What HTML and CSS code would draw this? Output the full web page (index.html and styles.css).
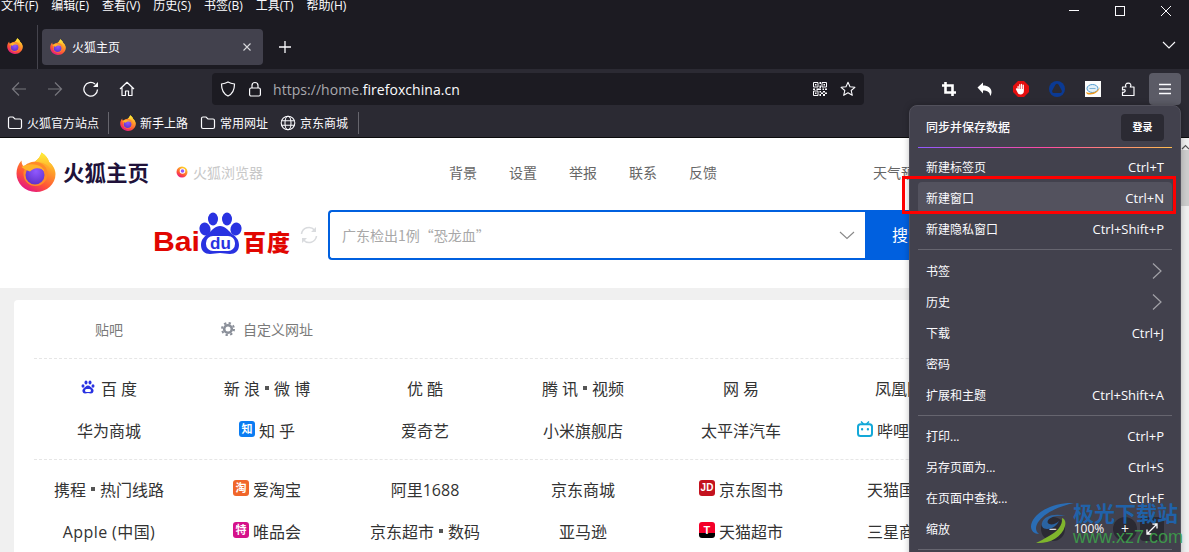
FILE: index.html
```html
<!DOCTYPE html>
<html lang="zh-CN">
<head>
<meta charset="utf-8">
<title>火狐主页</title>
<link rel="stylesheet" href="styles.css">
</head>
<body>
<svg class="defs" width="0" height="0" aria-hidden="true">
  <defs>
    <linearGradient id="ffBody" x1="0.85" y1="0.05" x2="0.3" y2="1">
      <stop offset="0" stop-color="#ffe226"/><stop offset="0.35" stop-color="#ff9a2b"/><stop offset="0.7" stop-color="#ff5138"/><stop offset="1" stop-color="#e31587"/>
    </linearGradient>
    <linearGradient id="ffFlame" x1="0.5" y1="0" x2="0.5" y2="1">
      <stop offset="0" stop-color="#fff03a"/><stop offset="1" stop-color="#ff9226"/>
    </linearGradient>
    <radialGradient id="ffGlobe" cx="0.55" cy="0.3" r="0.8">
      <stop offset="0" stop-color="#9059ff"/><stop offset="1" stop-color="#5b2bc4"/>
    </radialGradient>
    <symbol id="ff" viewBox="0 0 40 40">
      <path fill="url(#ffBody)" d="M20 40C9 40 .5 31.500 .5 21.500C.5 17 2 12.500 5.500 8.500C5.500 11.500 6.500 13.500 8 15C10 11.500 14.500 10 19 9.500C22 7.500 24.500 4.500 25.500 .5C30 3.500 32.500 7 33 10C37 13 39.500 17.500 39.500 22C39.500 32 31 40 20 40Z"/>
      <path fill="url(#ffFlame)" d="M25.500 .5C30 3.500 32.500 7 33 10C37 13 39 18 38 24C36 18 33 13 27 11C23.500 10 21 10 19 9.500C22 7.500 24.500 4.500 25.500 .5Z"/>
      <circle cx="19.500" cy="22" r="12" fill="#ff8a2a"/>
      <circle cx="19" cy="23" r="9.500" fill="url(#ffGlobe)"/>
      <path fill="#ffb32b" d="M5.500 15C9 12.500 15 11.500 21 13C25 14 27.500 16.500 28.500 19.500C26 16.500 22.500 15.500 19 16.500C17 17 15.500 18.200 14 19.500C11.500 18.800 8 17 5.500 15Z"/>
    </symbol>
    <symbol id="folder" viewBox="0 0 16 16">
      <path fill="none" stroke="currentColor" stroke-width="1.200" d="M1.500 3.500a1.500 1.500 0 0 1 1.500-1.500h3l2 2h5a1.500 1.500 0 0 1 1.500 1.500v6.500a1.500 1.500 0 0 1-1.500 1.500h-10a1.500 1.500 0 0 1-1.500-1.500z"/>
    </symbol>
    <symbol id="chev" viewBox="0 0 12 18">
      <path fill="none" stroke="currentColor" stroke-width="1.200" d="M2 1.500 10 9 2 16.500"/>
    </symbol>
  </defs>
</svg>

<div class="window">
  <header class="titlebar">
    <nav class="menubar">
      <span>文件(F)</span><span>编辑(E)</span><span>查看(V)</span><span>历史(S)</span><span>书签(B)</span><span>工具(T)</span><span>帮助(H)</span>
    </nav>
    <div class="winctl">
      <svg width="46" height="22" viewBox="0 0 46 22"><path d="M18 10.500h10" stroke="#fbfbfe"/></svg>
      <svg width="46" height="22" viewBox="0 0 46 22"><rect x="18.500" y="6.500" width="9" height="9" fill="none" stroke="#fbfbfe"/></svg>
      <svg width="46" height="22" viewBox="0 0 46 22"><path d="M18 6l10 10M28 6 18 16" stroke="#fbfbfe" fill="none"/></svg>
    </div>
  </header>

  <div class="tabbar">
    <svg class="pinned" width="16" height="16"><use href="#ff"/></svg>
    <div class="tabsep"></div>
    <div class="tab">
      <svg width="16" height="16"><use href="#ff"/></svg>
      <span class="tabtitle">火狐主页</span>
      <svg class="tabclose" width="10" height="10" viewBox="0 0 10 10"><path d="M1.500 1.500l7 7M8.500 1.500l-7 7" stroke="#d8d8dc" stroke-width="1.100"/></svg>
    </div>
    <svg class="newtab" width="14" height="14" viewBox="0 0 14 14"><path d="M7 1v12M1 7h12" stroke="#fbfbfe" stroke-width="1.300"/></svg>
    <svg class="alltabs" width="14" height="14" viewBox="0 0 14 14"><path d="M1 4l6 6 6-6" stroke="#fbfbfe" stroke-width="1.100" fill="none"/></svg>
  </div>

  <div class="toolbar">
    <div class="navbtn dim"><svg width="16" height="16" viewBox="0 0 16 16"><path d="M15 8H1.500M8 1.500 1.500 8 8 14.500" fill="none" stroke="currentColor" stroke-width="1.200"/></svg></div>
    <div class="navbtn dim"><svg width="16" height="16" viewBox="0 0 16 16"><path d="M1 8h13.500M8 1.500 14.500 8 8 14.500" fill="none" stroke="currentColor" stroke-width="1.200"/></svg></div>
    <div class="navbtn"><svg width="16" height="16" viewBox="0 0 16 16"><path d="M14.500 8.500A6.800 6.800 0 1 1 12 3" fill="none" stroke="currentColor" stroke-width="1.300"/><path d="M15 1v5h-5z" fill="currentColor"/></svg></div>
    <div class="navbtn"><svg width="16" height="16" viewBox="0 0 16 16"><path d="M1 8 8 1.300 15 8M3 6.500V14.500h3.500V10h3v4.500H13V6.500" fill="none" stroke="currentColor" stroke-width="1.200" stroke-linejoin="round"/></svg></div>

    <div class="urlbar">
      <svg class="ub-shield" width="16" height="16" viewBox="0 0 16 16"><path d="M8 1C5.500 2.500 3.500 2.800 1.500 3c0 5 1 9.500 6.500 12 5.500-2.500 6.500-7 6.500-12C12.500 2.800 10.500 2.500 8 1Z" fill="none" stroke="#fbfbfe" stroke-width="1.200"/></svg>
      <svg class="ub-lock" width="14" height="16" viewBox="0 0 14 16"><rect x="1.600" y="7" width="10.800" height="8" rx="1.500" fill="none" stroke="#fbfbfe" stroke-width="1.200"/><path d="M4 7V4.500a3 3 0 0 1 6 0V7" fill="none" stroke="#fbfbfe" stroke-width="1.200"/></svg>
      <span class="url"><span class="url-dim">https://home.</span>firefoxchina.cn</span>
      <svg class="ub-qr" width="14" height="14" viewBox="0 0 14 14"><path fill="none" stroke="#fbfbfe" d="M.5.5h4.500v4.500H.5zM9 .5h4.500v4.500H9zM.5 9h4.500v4.500H.5z"/><path fill="#fbfbfe" d="M2 2h1.500v1.500H2zM10.500 2H12v1.500h-1.500zM2 10.500h1.500V12H2zM6.500 0H8v2H6.500zM6.500 3.500H8V6H6.500zM0 6.500h2V8H0zM3.500 6.500H8V8H3.500zM9.500 6.500H11V8H9.500zM12 6.500h2V8h-2zM6.500 9H8v1.500H6.500zM8 10.500h2V12H8zM6.500 12H8v2H6.500zM10 9h2v1.500h-2zM12 10.500h2V12h-2zM10 12h2v2h-2z"/></svg>
      <svg class="ub-star" width="16" height="16" viewBox="0 0 16 16"><path d="M8 1.300 10 5.800l4.900.5-3.700 3.200 1.100 4.800L8 11.800l-4.300 2.500 1.100-4.800L1.100 6.300 6 5.800Z" fill="none" stroke="#fbfbfe" stroke-width="1.100" stroke-linejoin="round"/></svg>
    </div>

    <div class="extensions">
      <div class="navbtn"><svg width="16" height="16" viewBox="0 0 16 16"><path d="M4.500 1v10.500H15M1 4.500h10.500V15" fill="none" stroke="#fff" stroke-width="2.600"/></svg></div>
      <div class="navbtn"><svg width="16" height="16" viewBox="0 0 16 16"><path d="M.5 6.500 6 1.500v3c5 0 8.500 2.500 8.500 6.500 0 1.500-.5 3-1.500 4 .3-3-1.500-5.500-7-5.500v3Z" fill="#fff"/></svg></div>
      <div class="navbtn"><svg width="16" height="16" viewBox="0 0 16 16"><path d="M5 0h6l5 5v6l-5 5H5l-5-5V5Z" fill="#e30e0e"/><path d="M4.500 5.500c0-1 1.200-1 1.200 0V8h.5V3.700c0-1 1.200-1 1.200 0V8h.5V3.400c0-1 1.300-1 1.300 0V8h.5V4.300c0-1 1.200-1 1.200 0V10c0 2-1.300 3.500-3.300 3.500-1.800 0-2.500-1-3.200-2.300L3 8.500c-.5-1 .7-1.600 1.500-.7Z" fill="#fff"/></svg></div>
      <div class="navbtn"><svg width="16" height="16" viewBox="0 0 16 16"><circle cx="8" cy="8" r="8" fill="#0b3a94"/><path d="M8 2.800c.8 0 1.200.4 1.600 1l3 5.400c.7 1.300-.1 2.800-1.400 2.800H4.800c-1.300 0-2.100-1.500-1.400-2.800l3-5.400c.4-.6.800-1 1.600-1Z" fill="#2b2a33"/></svg></div>
      <div class="navbtn"><svg width="16" height="16" viewBox="0 0 16 16"><rect width="16" height="16" fill="#fdfdfd"/><ellipse cx="7.500" cy="7.500" rx="5.500" ry="4" fill="#e3f0f8" stroke="#3f92cc" stroke-width=".9"/><path d="M1 11c4 2 11 1 14-5-1 5-7 9-13 7Z" fill="#ef9a1d"/><path d="M4.500 7.500h6" stroke="#7fb4d8"/></svg></div>
      <div class="navbtn"><svg width="16" height="16" viewBox="0 0 16 16"><path d="M1.500 6H5c-.8-1.200-.8-2 0-3 .8-1.300 3.700-1.300 4.500 0 .7 1 .6 1.900-.2 3H13v8.500H1.500v-3.300c1.300.6 2.700-.3 2.700-1.600S2.800 8.400 1.500 9Z" fill="none" stroke="#fbfbfe" stroke-width="1.200" stroke-linejoin="round"/></svg></div>
      <div class="navbtn active"><svg width="14" height="12" viewBox="0 0 14 12"><path d="M1 1.500h12M1 6h12M1 10.500h12" stroke="#fbfbfe" stroke-width="1.300"/></svg></div>
    </div>
  </div>

  <div class="bookmarks">
    <span class="bm first"><svg width="16" height="16"><use href="#folder"/></svg>火狐官方站点</span>
    <i class="bmsep"></i>
    <span class="bm"><svg width="16" height="16"><use href="#ff"/></svg>新手上路</span>
    <span class="bm"><svg width="16" height="16"><use href="#folder"/></svg>常用网址</span>
    <span class="bm last"><svg width="16" height="16" viewBox="0 0 16 16"><g fill="none" stroke="currentColor" stroke-width="1.100"><circle cx="8" cy="8" r="6.800"/><ellipse cx="8" cy="8" rx="3" ry="6.800"/><path d="M1.500 5.700h13M1.500 10.300h13"/></g></svg>京东商城</span>
    <i class="bmsep"></i>
  </div>

  <main class="page">
    <section class="masthead">
      <div class="hd-top">
        <svg class="logo" width="40" height="40"><use href="#ff"/></svg>
        <span class="brand">火狐主页</span>
        <svg class="sublogo" width="12" height="12" viewBox="0 0 12 12"><circle cx="6" cy="6" r="5.500" fill="url(#ffBody)"/><circle cx="6.500" cy="5" r="2.800" fill="#fff"/><circle cx="6.500" cy="5" r="1.800" fill="#9059ff"/></svg>
        <span class="subbrand">火狐浏览器</span>
        <nav class="hd-nav"><span>背景</span><span>设置</span><span>举报</span><span>联系</span><span>反馈</span></nav>
        <span class="weather">天气预报</span>
      </div>
      <div class="searchrow">
        <svg class="baidu" width="138" height="44" viewBox="0 0 138 44">
          <text x="0" y="39" class="bd-latin" textLength="47" lengthAdjust="spacingAndGlyphs">Bai</text>
          <g fill="#2932e1">
            <ellipse cx="52" cy="17" rx="5.500" ry="6.500" transform="rotate(-15 52 17)"/>
            <ellipse cx="60" cy="7" rx="5" ry="6.500"/>
            <ellipse cx="74" cy="7" rx="5" ry="6.500"/>
            <ellipse cx="83" cy="17" rx="5.500" ry="6.500" transform="rotate(15 83 17)"/>
            <path d="M67 14c5 0 8 4 11 7 4 3 8 6 8 12 0 6-4 9-9 9-4 0-6-1-10-1s-6 1-10 1c-5 0-9-3-9-9 0-6 4-9 8-12 3-3 6-7 11-7Z"/>
          </g>
          <rect x="53" y="24" width="29" height="15" rx="7" fill="#fff"/>
          <text x="67.500" y="37" class="bd-du" text-anchor="middle">du</text>
          <text x="90" y="39" class="bd-cn" textLength="47">百度</text>
        </svg>
        <svg class="bd-refresh" width="18" height="18" viewBox="0 0 18 18"><g fill="none" stroke="#d9dbde" stroke-width="1.600"><path d="M1.500 8A7.500 7.500 0 0 1 14.500 4"/><path d="M16.500 10A7.500 7.500 0 0 1 3.500 14"/></g><path d="M16 1v5h-5zM2 17v-5h5z" fill="#d9dbde"/></svg>
        <div class="searchbox">
          <span class="placeholder">广东检出1例“恐龙血”</span>
          <svg class="sb-chev" width="16" height="9" viewBox="0 0 16 9"><path d="M1 1l7 6.500L15 1" fill="none" stroke="#888" stroke-width="1.100"/></svg>
        </div>
        <div class="searchbtn">搜索</div>
      </div>
    </section>

    <section class="card">
      <div class="cardhead">
        <span class="ch-item">贴吧</span>
        <span class="ch-item"><svg width="14" height="14" viewBox="0 0 14 14"><circle cx="7" cy="7" r="3.800" fill="none" stroke="#8a8f99" stroke-width="2.600"/><circle cx="7" cy="7" r="6" fill="none" stroke="#8a8f99" stroke-width="2" stroke-dasharray="2.300 2.400"/></svg>自定义网址</span>
      </div>
      <div class="dash"></div>
      <div class="links">
        <a><svg class="ic14" viewBox="0 0 14 14"><g fill="#2932e1"><ellipse cx="2" cy="6" rx="1.500" ry="1.800"/><ellipse cx="5" cy="2.500" rx="1.500" ry="2"/><ellipse cx="9" cy="2.500" rx="1.500" ry="2"/><ellipse cx="12" cy="6" rx="1.500" ry="1.800"/><path d="M7 5.500c2 0 3 2 4.500 3 2 1.500 1 5-1.500 5-1 0-2-.5-3-.5s-2 .5-3 .5c-2.500 0-3.500-3.500-1.500-5C4 7.500 5 5.500 7 5.500Z"/></g><rect x="4" y="9" width="6" height="3" rx="1.500" fill="#fff"/></svg>百 度</a>
        <a>新 浪<i class="dot"></i>微 博</a>
        <a>优 酷</a>
        <a>腾 讯<i class="dot"></i>视频</a>
        <a>网 易</a>
        <a>凤凰网</a>
        <a>华为商城</a>
        <a><b class="badge zhihu">知</b>知 乎</a>
        <a>爱奇艺</a>
        <a>小米旗舰店</a>
        <a>太平洋汽车</a>
        <a><svg class="ic16" viewBox="0 0 16 16"><path d="M4 .5l2.500 2.500M12 .5 9.500 3" stroke="#13a8d8" stroke-width="1.500"/><rect x="1" y="3.200" width="14" height="11.800" rx="2.500" fill="#fff" stroke="#13a8d8" stroke-width="2"/><rect x="4" y="7" width="2.200" height="2.500" rx="1" fill="#13a8d8"/><rect x="9.800" y="7" width="2.200" height="2.500" rx="1" fill="#13a8d8"/></svg>哔哩哔哩</a>
      </div>
      <div class="dash"></div>
      <div class="links">
        <a>携程<i class="dot"></i>热门线路</a>
        <a><b class="badge taobao">淘</b>爱淘宝</a>
        <a>阿里1688</a>
        <a>京东商城</a>
        <a><b class="badge jd">JD</b>京东图书</a>
        <a>天猫国际</a>
        <a class="wide">Apple (中国)</a>
        <a><b class="badge vip">特</b>唯品会</a>
        <a>京东超市<i class="dot"></i>数码</a>
        <a>亚马逊</a>
        <a><b class="badge tmall">T</b>天猫超市</a>
        <a>三星商城</a>
      </div>
    </section>

    <div class="scrollbar">
      <svg width="9" height="6" viewBox="0 0 9 6"><path d="M1 5l3.500-3.500L8 5" fill="none" stroke="#555" stroke-width="1.200"/></svg>
      <div class="thumb"></div>
    </div>
  </main>

  <aside class="appmenu">
    <div class="mn-head"><strong>同步并保存数据</strong><span class="signin">登录</span></div>
    <div class="mn-grad"></div>
    <ul class="mn-group g1">
      <li><span>新建标签页</span><kbd>Ctrl+T</kbd></li>
      <li class="hover"><span>新建窗口</span><kbd>Ctrl+N</kbd></li>
      <li><span>新建隐私窗口</span><kbd>Ctrl+Shift+P</kbd></li>
    </ul>
    <div class="mn-sep"></div>
    <ul class="mn-group">
      <li><span>书签</span><svg class="mn-chev" width="12" height="18"><use href="#chev"/></svg></li>
      <li><span>历史</span><svg class="mn-chev" width="12" height="18"><use href="#chev"/></svg></li>
      <li><span>下载</span><kbd>Ctrl+J</kbd></li>
      <li><span>密码</span></li>
      <li><span>扩展和主题</span><kbd>Ctrl+Shift+A</kbd></li>
    </ul>
    <div class="mn-sep"></div>
    <ul class="mn-group g3">
      <li><span>打印...</span><kbd>Ctrl+P</kbd></li>
      <li><span>另存页面为...</span><kbd>Ctrl+S</kbd></li>
      <li><span>在页面中查找...</span><kbd>Ctrl+F</kbd></li>
      <li class="zoomrow"><span>缩放</span>
        <div class="zoomctl">
          <span class="zbtn">−</span><span class="zval">100%</span><span class="zbtn">+</span>
          <span class="zfull"><svg width="12" height="12" viewBox="0 0 12 12"><path d="M1 11 11 1M6.500 1H11v4.500M5.500 11H1V6.500" fill="none" stroke="#fbfbfe" stroke-width="1.300"/></svg></span>
        </div>
      </li>
    </ul>
    <div class="mn-sep"></div>
  </aside>

  <div class="redbox"></div>

  <div class="watermark">
    <svg class="wm-swirl" width="45" height="42" viewBox="0 0 45 42">
      <path d="M44 1C28 0 8 7 2 20c-3 7 1 12 7 12-4-3-4-8 0-13C16 10 30 4 44 1Z" fill="#2a6db5"/>
      <path d="M36 14C24 11 14 14 12 21c-1 3 1 6 5 6 6 0 10-4 12-8-3 3-7 4-10 3-2-1-2-3 0-5 3-3 10-4 17-3Z" fill="#2a6db5" opacity=".85"/>
      <path d="M6 41c12 1 26-5 29-17 1-4 0-7-3-8 1 7-5 14-13 18-5 3-9 5-13 7Z" fill="#7fb52d"/>
    </svg>
    <div class="wm-text">
      <span class="wm-cn">极光下载站</span>
      <span class="wm-url">www.xz7.com</span>
    </div>
  </div>
</div>
</body>
</html>
```

FILE: styles.css
```css
* { box-sizing: border-box; }
html, body { margin: 0; padding: 0; }
body {
  width: 1189px;
  height: 552px;
  overflow: hidden;
  background: #fff;
  font-family: "Open Sans", "Noto Sans CJK SC", sans-serif;
  font-size: 12px;
}
.defs { position: absolute; }
svg { display: block; flex: none; }
ul { list-style: none; margin: 0; padding: 0; }
kbd { font: inherit; font-size: 13px; }

.window { position: relative; width: 1189px; height: 552px; overflow: hidden; }

/* title bar */
.titlebar {
  height: 22px;
  background: #1c1b22;
  color: #fbfbfe;
  display: flex;
  justify-content: space-between;
  overflow: hidden;
}
.menubar { display: flex; gap: 13px; padding-left: 1px; height: 11px; line-height: 11px; }
.winctl { display: flex; }

/* tabs */
.tabbar {
  height: 47px;
  background: #1c1b22;
  display: flex;
  align-items: center;
  color: #fbfbfe;
}
.pinned { margin-left: 7px; }
.tabsep { width: 1px; height: 44px; margin: 0 4px 0 14px; background: #45444d; align-self: flex-end; }
.tab {
  width: 221px;
  height: 36px;
  margin-top: 3px;
  background: #42414d;
  border-radius: 4px;
  display: flex;
  align-items: center;
  padding: 0 11px 0 8px;
}
.tabtitle { margin-left: 6px; flex: 1; }
.newtab { margin-left: 15px; margin-top: 3px; }
.alltabs { margin-left: auto; margin-right: 13px; margin-top: -1px; }

/* toolbar */
.toolbar {
  height: 38px;
  background: #2b2a33;
  display: flex;
  align-items: center;
  padding: 2px 8px 0 1px;
  color: #fbfbfe;
}
.navbtn { width: 36px; height: 32px; display: flex; align-items: center; justify-content: center; }
.navbtn.dim { color: #77767d; }
.navbtn.active { width: 32px; background: #5b5b66; border-radius: 4px; margin-left: 2px; }
.urlbar {
  width: 652px;
  height: 32px;
  margin-left: 67px;
  background: #1c1b22;
  border-radius: 4px;
  display: flex;
  align-items: center;
  padding: 0 8px;
}
.ub-lock { margin-left: 12px; }
.url { margin-left: 11px; font-size: 14px; flex: 1; color: #fbfbfe; letter-spacing: .04px; }
.url-dim { color: #a9a9ae; }
.ub-star { margin-left: 13px; }
.extensions { display: flex; margin-left: auto; }

/* bookmarks */
.bookmarks {
  height: 31px;
  background: #2b2a33;
  border-bottom: 1px solid #0c0c0d;
  display: flex;
  align-items: center;
  color: #fbfbfe;
  padding: 1px 0 0 7px;
}
.bm { display: flex; align-items: center; gap: 4px; margin-right: 12px; }
.bm.first { margin-right: 9px; }
.bm.last { margin-right: 10px; }
.bmsep { width: 1px; height: 22px; background: #66656d; margin-right: 11px; }

/* page */
.page { position: relative; height: 414px; background: #f0f0f0; overflow: hidden; }
.masthead { height: 150px; background: #fff; }
.hd-top { height: 72px; display: flex; align-items: center; padding-bottom: 4px; }
.logo { margin-left: 16px; }
.brand { margin: -2px 0 0 7px; font-size: 21.500px; font-weight: 700; color: #20123a; white-space: nowrap; }
.sublogo { margin-left: 27px; }
.subbrand { margin-left: 5px; font-size: 14px; color: #c8c8c8; white-space: nowrap; }
.hd-nav { display: flex; gap: 32px; margin-left: 186px; font-size: 14px; color: #666; }
.weather { margin-left: 156px; font-size: 14px; color: #666; white-space: nowrap; }

.searchrow { display: flex; align-items: flex-start; padding-left: 153px; height: 50px; }
.baidu { margin-top: 2px; }
.bd-latin { font: 700 27px "Liberation Sans", sans-serif; fill: #e10601; }
.bd-du { font: 700 17px "Liberation Sans", sans-serif; fill: #2932e1; }
.bd-cn { font: 900 23px "Noto Sans CJK SC", sans-serif; fill: #e10601; }
.bd-refresh { margin: 16px 0 0 9px; }
.searchbox {
  width: 537px;
  height: 50px;
  margin-left: 10px;
  border: 2px solid #0060df;
  border-right: 0;
  border-radius: 4px 0 0 4px;
  display: flex;
  align-items: center;
  justify-content: space-between;
  padding: 0 10px 0 12px;
  background: #fff;
}
.placeholder { font-family: "Noto Sans CJK SC", sans-serif; font-size: 14px; color: #a8a8a8; }
.searchbtn {
  width: 130px;
  height: 50px;
  background: #0060df;
  color: #fff;
  font-size: 16px;
  line-height: 50px;
  padding-left: 27px;
}

.card { width: 1240px; margin: 12px 0 0 14px; background: #fff; border-radius: 4px; height: 260px; }
.cardhead { height: 58px; display: grid; grid-template-columns: repeat(6, 158px); padding-left: 16px; align-items: center; font-size: 14px; color: #7a7a7a; }
.ch-item { display: flex; align-items: center; justify-content: center; gap: 8px; }
.dash { margin-left: 20px; border-top: 1px dashed #e6e6e6; width: 1100px; }
.links {
  display: grid;
  grid-template-columns: repeat(6, 158px);
  grid-auto-rows: 42px;
  padding: 8px 0 8px 16px;
  font-size: 16px;
  color: #333;
}
.links a { display: flex; align-items: center; justify-content: center; white-space: pre; gap: 4px; }
.links a.wide { letter-spacing: .4px; }
.dot { width: 4px; height: 4px; background: #555; margin: 0 1px; flex: none; }
.ic14 { width: 14px; height: 14px; margin-right: 2px; margin-top: -2px; }
.ic16 { width: 16px; height: 16px; margin-top: -2px; }
.badge {
  width: 16px; height: 16px; border-radius: 3px; color: #fff;
  font-size: 11px; font-weight: 700; line-height: 16px; text-align: center; flex: none;
  margin-top: -2px;
}
.zhihu { background: #0a7cf2; }
.taobao { background: #f0662a; }
.vip { background: #d5128a; }
.jd { background: #c4121e; font-family: "Liberation Sans", sans-serif; font-size: 10px; }
.tmall { background: linear-gradient(#f40029 70%, #000 70%); font-family: "Liberation Sans", sans-serif; }

.scrollbar {
  position: absolute; right: 0; top: 0; width: 17px; height: 100%;
  background: #f0f0f0; display: flex; flex-direction: column; align-items: center;
}
.scrollbar svg { margin-top: 6px; margin-left: 9px; }
.thumb { width: 17px; height: 56px; background: #cdcdcd; }

/* app menu */
.appmenu {
  position: absolute;
  left: 909px;
  top: 105px;
  width: 272px;
  height: 480px;
  background: #42414d;
  border: 1px solid #52515c;
  border-radius: 8px;
  color: #fbfbfe;
  padding: 0 8px;
  box-shadow: 0 0 6px rgba(0,0,0,.25);
}
.mn-head { display: flex; align-items: center; justify-content: space-between; height: 41px; padding: 1px 8px 0; }
.mn-head strong { font-weight: 500; font-size: 12px; }
.signin { width: 43px; height: 27px; background: #2b2a33; border-radius: 4px; font-size: 10px; font-weight: 700; line-height: 27px; text-align: center; }
.mn-grad { height: 1px; background: linear-gradient(90deg, #9059ff, #ff4aa2 50%, #ffbd4f); }
.mn-group { padding: 5px 0; }
.mn-group.g1 { padding-top: 3px; }
.mn-group.g3 { padding-top: 4px; }
.mn-group li { height: 31px; display: flex; align-items: center; justify-content: space-between; padding: 0 8px; border-radius: 4px; }
.mn-group li.hover { background: #53525e; }
.mn-sep { height: 1px; background: #66656f; }
.mn-chev { color: #a2a2a8; margin-right: 1px; }
.zoomctl { display: flex; align-items: center; }
.zbtn { width: 24px; height: 24px; border-radius: 50%; background: #2b2a33; text-align: center; line-height: 24px; font-size: 14px; }
.zval { width: 48px; text-align: center; }
.zfull { width: 24px; height: 24px; margin-left: 3px; background: #2b2a33; border-radius: 4px; display: flex; align-items: center; justify-content: center; }

.redbox { position: absolute; left: 902px; top: 176px; width: 274px; height: 38px; border: 3px solid #f00; }

.watermark { position: absolute; left: 1030px; top: 502px; display: flex; pointer-events: none; }
.wm-text { display: flex; flex-direction: column; margin-left: -2px; }
.wm-cn { font-size: 21px; line-height: 22px; font-weight: 700; color: #1d66b3; white-space: nowrap; opacity: .9; }
.wm-url { font: 18px/20px "Liberation Sans", sans-serif; color: #3d9f4a; margin-top: 3px; white-space: nowrap; opacity: .9; }
```
